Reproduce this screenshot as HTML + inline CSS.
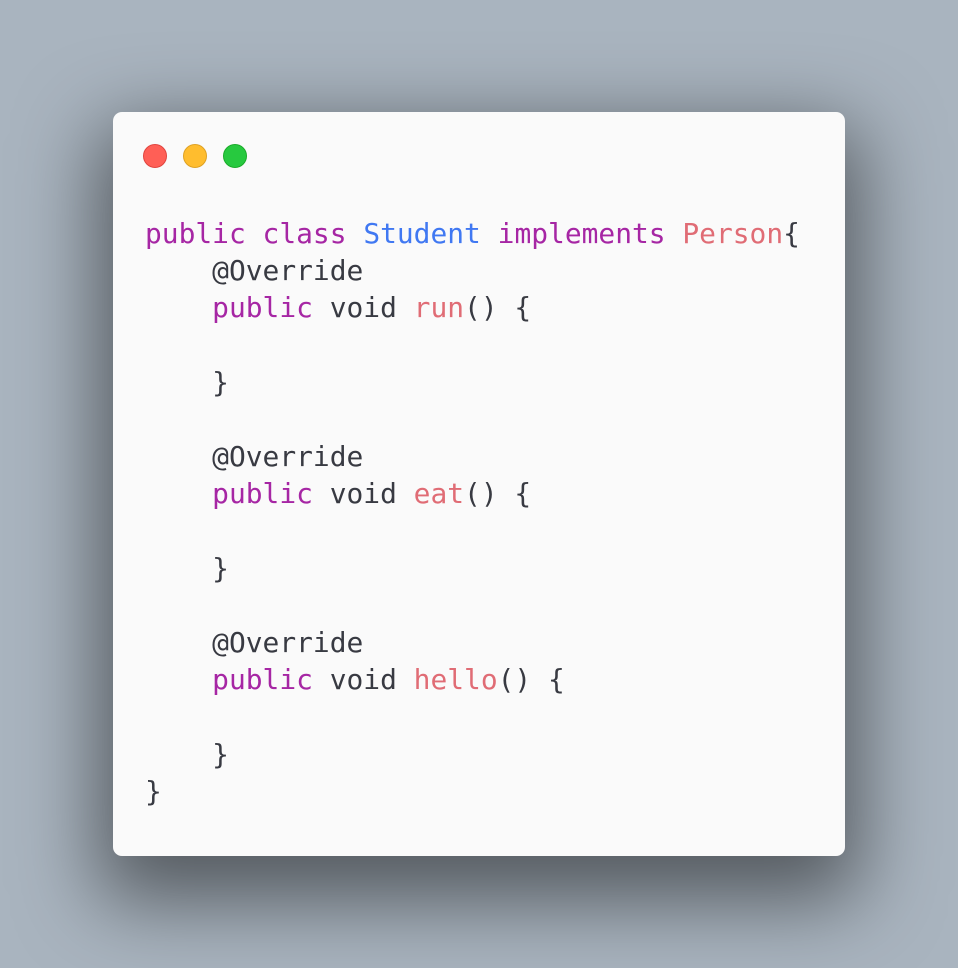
<!DOCTYPE html>
<html><head><style>
html,body{margin:0;padding:0;width:958px;height:968px;overflow:hidden;background:#a9b4bf;}
.win{position:absolute;left:113px;top:112px;width:732px;height:744px;background:#fafafa;border-radius:9px;box-shadow:0 30px 80px 15px rgba(0,0,0,0.5);}
.dot{position:absolute;top:32px;width:24px;height:24px;border-radius:50%;box-sizing:border-box;}
pre{position:absolute;left:32px;top:103px;margin:0;font-family:"DejaVu Sans Mono","Liberation Mono",monospace;font-size:27.9px;line-height:37.2px;color:#383a42;}
.k{color:#a626a4}.c{color:#4078f2}.f{color:#e06c75}
</style></head><body>
<div class="win">
<div class="dot" style="left:30px;background:#ff5f56;border:1px solid #e0443e"></div>
<div class="dot" style="left:70px;background:#ffbd2e;border:1px solid #dea123"></div>
<div class="dot" style="left:110px;background:#27c93f;border:1px solid #1aab29"></div>
<pre><span class="k">public</span> <span class="k">class</span> <span class="c">Student</span> <span class="k">implements</span> <span class="f">Person</span>{
    @Override
    <span class="k">public</span> void <span class="f">run</span>() {

    }

    @Override
    <span class="k">public</span> void <span class="f">eat</span>() {

    }

    @Override
    <span class="k">public</span> void <span class="f">hello</span>() {

    }
}</pre>
</div>
</body></html>
